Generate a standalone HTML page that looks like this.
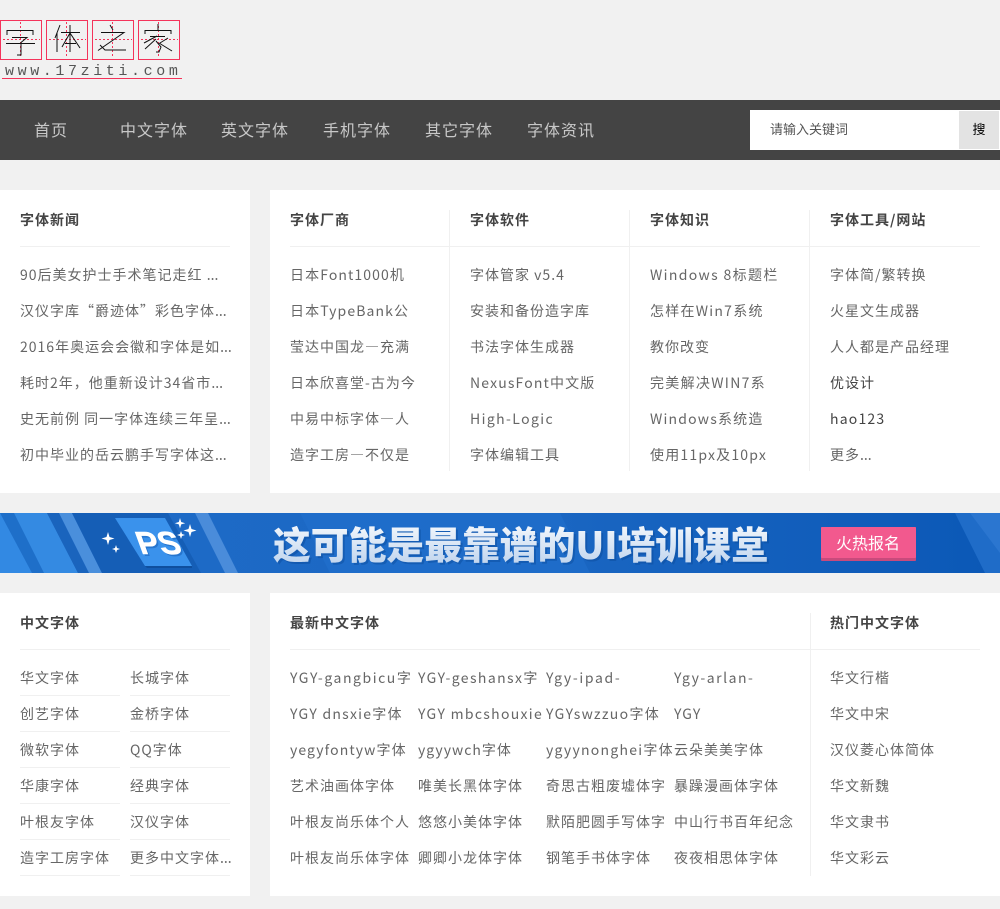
<!DOCTYPE html>
<html lang="zh-CN"><head><meta charset="utf-8"><title>字体之家</title>
<style>
html,body{margin:0;padding:0;background:#f1f1f1}
body{width:1000px;height:909px;position:relative;overflow:hidden;font-family:"Noto Sans CJK SC","DejaVu Sans",sans-serif;font-size:14px;letter-spacing:1px;color:#666}
.a{position:absolute;white-space:nowrap}
.p{position:absolute;background:#fff}
.l{position:absolute;background:#f0f0f0}
.h{position:absolute;white-space:nowrap;font-weight:bold;color:#444;font-size:14px;line-height:20px}
.t{position:absolute;white-space:nowrap;line-height:20px;color:#666}
.t i{font-style:normal;letter-spacing:0}
.n{position:absolute;white-space:nowrap;top:119px;line-height:20px;font-size:16px;color:#c8c8c8}
.d{color:#444}
</style></head><body>

<svg class="a" style="left:0;top:0" width="190" height="85" viewBox="0 0 190 85">
<g fill="none" stroke="#f4335a">
<rect x=".5" y="20.5" width="41" height="39"/><rect x="46.500" y="20.5" width="41" height="39"/><rect x="92.500" y="20.5" width="41" height="39"/><rect x="138.500" y="20.5" width="41" height="39"/>
<g stroke-dasharray="2 2"><path d="M20.500 22v36M66.500 22v36M112.500 22v36M158.500 22v36M3 39.500h37M49 39.500h37M95 39.500h37M141 39.500h37"/></g>
<path d="M2 78.500h180"/>
</g>
<g fill="none" stroke="#111" stroke-width="1">
<path d="M7 30.500h26M7 30v5M33 30v5M12 37.500h15l-6 5M6 43.500h29M21 42v13l-4 0"/>
<path d="M60 25l-5 13M57 33v19M61 32.500h19M70 25v27M70 33l-8 14M70 33l10 15M65 43.500h11"/>
<path d="M110 25l3 5M101 32.500h23l-26 18M100 45l5 5h21"/>
<path d="M158 24v6M145 30.500h26M145 30v4M171 30v4M150 36.500h15M157 36l-13 7M156 39l-11 10M156 41l5 6-2 5-3 0M168 38l-8 5M159 43l13 8"/>
</g>
</svg>
<div class="a" style="left:5px;top:63px;font:15px/18px 'Liberation Mono',monospace;letter-spacing:3.6px;color:#555">www.17ziti.com</div>

<div class="a" style="left:0;top:100px;width:1000px;height:60px;background:#444"></div>
<div class="n" style="left:34px">首页</div>
<div class="n" style="left:120px">中文字体</div>
<div class="n" style="left:221px">英文字体</div>
<div class="n" style="left:323px">手机字体</div>
<div class="n" style="left:425px">其它字体</div>
<div class="n" style="left:527px">字体资讯</div>
<div class="p" style="left:750px;top:110px;width:250px;height:40px"></div>
<div class="a" style="left:770px;top:119px;font-size:13px;line-height:19px;letter-spacing:0;color:#555">请输入关键词</div>
<div class="a" style="left:959px;top:111px;width:40px;height:38px;background:#e3e3e3;text-align:center;line-height:36px;font-size:13px;letter-spacing:0;color:#000">搜</div>

<div class="p" style="left:0;top:190px;width:250px;height:303px"></div>
<div class="p" style="left:270px;top:190px;width:730px;height:303px"></div>
<div class="l" style="left:20px;top:246px;width:210px;height:1px"></div>
<div class="l" style="left:290px;top:246px;width:690px;height:1px"></div>
<div class="l" style="left:449px;top:210px;width:1px;height:261px"></div>
<div class="l" style="left:629px;top:210px;width:1px;height:261px"></div>
<div class="l" style="left:809px;top:210px;width:1px;height:261px"></div>

<div class="h" style="left:20px;top:210px">字体新闻</div>
<div class="h" style="left:290px;top:210px">字体厂商</div>
<div class="h" style="left:470px;top:210px">字体软件</div>
<div class="h" style="left:650px;top:210px">字体知识</div>
<div class="h" style="left:830px;top:210px">字体工具/网站</div>

<div class="t" style="left:20px;top:265px">90后美女护士手术笔记走红 <i>...</i></div>
<div class="t" style="left:20px;top:301px">汉仪字库“爵迹体”彩色字体<i>...</i></div>
<div class="t" style="left:20px;top:337px">2016年奥运会会徽和字体是如<i>...</i></div>
<div class="t" style="left:20px;top:373px">耗时2年，他重新设计34省市<i>...</i></div>
<div class="t" style="left:20px;top:409px">史无前例 同一字体连续三年呈<i>...</i></div>
<div class="t" style="left:20px;top:445px">初中毕业的岳云鹏手写字体这<i>...</i></div>

<div class="t" style="left:290px;top:265px;letter-spacing:1.1px">日本Font1000机</div>
<div class="t" style="left:290px;top:301px;letter-spacing:1.1px">日本TypeBank公</div>
<div class="t" style="left:290px;top:337px">莹达中国龙—充满</div>
<div class="t" style="left:290px;top:373px">日本欣喜堂-古为今</div>
<div class="t" style="left:290px;top:409px">中易中标字体—人</div>
<div class="t" style="left:290px;top:445px">造字工房—不仅是</div>

<div class="t" style="left:470px;top:265px">字体管家 v5.4</div>
<div class="t" style="left:470px;top:301px">安装和备份造字库</div>
<div class="t" style="left:470px;top:337px">书法字体生成器</div>
<div class="t" style="left:470px;top:373px;letter-spacing:1.15px">NexusFont中文版</div>
<div class="t" style="left:470px;top:409px;letter-spacing:1.4px">High-Logic</div>
<div class="t" style="left:470px;top:445px">字体编辑工具</div>

<div class="t" style="left:650px;top:265px;letter-spacing:1.35px">Windows 8标题栏</div>
<div class="t" style="left:650px;top:301px;letter-spacing:1.25px">怎样在Win7系统</div>
<div class="t" style="left:650px;top:337px">教你改变</div>
<div class="t" style="left:650px;top:373px;letter-spacing:1.3px">完美解决WIN7系</div>
<div class="t" style="left:650px;top:409px;letter-spacing:1.2px">Windows系统造</div>
<div class="t" style="left:650px;top:445px;letter-spacing:1.2px">使用11px及10px</div>

<div class="t" style="left:830px;top:265px">字体简/繁转换</div>
<div class="t" style="left:830px;top:301px">火星文生成器</div>
<div class="t" style="left:830px;top:337px">人人都是产品经理</div>
<div class="t d" style="left:830px;top:373px">优设计</div>
<div class="t d" style="left:830px;top:409px;letter-spacing:1.2px">hao123</div>
<div class="t" style="left:830px;top:445px">更多<i>...</i></div>

<svg class="a" style="left:0;top:513px" width="1000" height="60" viewBox="0 0 1000 60">
<defs>
<linearGradient id="bg" x1="0" x2="1" y1="0" y2="0"><stop offset="0" stop-color="#1f6cc8"/><stop offset=".55" stop-color="#1a66c2"/><stop offset="1" stop-color="#0b58b6"/></linearGradient>
<linearGradient id="tx" x1="0" x2="0" y1="0" y2="1"><stop offset="0" stop-color="#ffffff"/><stop offset="1" stop-color="#b9d0ec"/></linearGradient>
</defs>
<rect width="1000" height="60" fill="url(#bg)"/>
<polygon points="0,0 14,0 44,60 32,60 0,0" fill="#1e6fc9"/>
<polygon points="0,0 0,60 32,60" fill="#3289e3"/>
<polygon points="14,0 47,0 78,60 44,60" fill="#348ae2"/>
<polygon points="47,0 59,0 89,60 78,60" fill="#1a64bd"/>
<polygon points="59,0 72,0 102,60 89,60" fill="#4a8fdc"/>
<polygon points="72,0 168,0 201,60 102,60" fill="#155eb6"/>
<polygon points="195,0 208,0 238,60 225,60" fill="#4a8cda"/>
<polygon points="300,0 560,0 590,60 330,60" fill="#2272cf" opacity=".5"/>
<polygon points="955,0 1000,0 1000,60 985,60" fill="#1f6cc8"/>
<polygon points="970,0 1000,0 1000,40" fill="#2b76d0"/>
<polygon points="145,53 192,53 192,55 147,55" fill="#0f4f9e"/>
<polygon points="115,5 165,5 192,53 145,53" fill="#3a92ec"/>
<text x="0" y="0" font-family="Liberation Sans,sans-serif" font-weight="bold" font-size="32" letter-spacing="0" fill="#1a64bd" opacity=".6" transform="translate(143,43) skewX(20)">PS</text>
<text x="0" y="0" font-family="Liberation Sans,sans-serif" font-weight="bold" font-size="32" letter-spacing="0" fill="#fff" stroke="#fff" stroke-width=".6" transform="translate(141,41) skewX(20)">PS</text>
<g fill="#fff">
<path d="M108 19l1.500 5 5 1.500-5 1.500-1.500 5-1.500-5-5-1.500 5-1.500zM116 32l1 3 3 1-3 1-1 3-1-3-3-1 3-1zM180 5l1.200 4 4 1.200-4 1.200-1.200 4-1.200-4-4-1.200 4-1.200zM190 11l1.500 5 5 1.500-5 1.500-1.500 5-1.500-5-5-1.500 5-1.500zM181 18l1 3 3 1-3 1-1 3-1-3-3-1 3-1z"/>
</g>
<text x="273" y="46" font-family="Noto Sans CJK SC,sans-serif" font-weight="900" font-size="37.800" letter-spacing="0" fill="#0a4a9a" opacity=".45" transform="translate(2 2)">这可能是最靠谱的UI培训课堂</text>
<text x="273" y="46" font-family="Noto Sans CJK SC,sans-serif" font-weight="900" font-size="37.800" letter-spacing="0" fill="url(#tx)">这可能是最靠谱的UI培训课堂</text>
<rect x="821" y="14" width="95" height="34" rx="1" fill="#c94a7c"/>
<rect x="821" y="14" width="95" height="31" rx="1" fill="#f2598e"/>
<text x="836" y="36" font-family="Noto Sans CJK SC,sans-serif" font-size="16" letter-spacing="0" fill="#fff">火热报名</text>
</svg>

<div class="p" style="left:0;top:593px;width:250px;height:303px"></div>
<div class="p" style="left:270px;top:593px;width:730px;height:303px"></div>
<div class="l" style="left:20px;top:649px;width:210px;height:1px"></div>
<div class="l" style="left:290px;top:649px;width:690px;height:1px"></div>
<div class="l" style="left:810px;top:613px;width:1px;height:263px"></div>
<div class="h" style="left:20px;top:613px">中文字体</div>
<div class="h" style="left:290px;top:613px">最新中文字体</div>
<div class="h" style="left:830px;top:613px">热门中文字体</div>

<div class="l" style="left:20px;top:695px;width:100px;height:1px"></div><div class="l" style="left:130px;top:695px;width:100px;height:1px"></div>
<div class="l" style="left:20px;top:731px;width:100px;height:1px"></div><div class="l" style="left:130px;top:731px;width:100px;height:1px"></div>
<div class="l" style="left:20px;top:767px;width:100px;height:1px"></div><div class="l" style="left:130px;top:767px;width:100px;height:1px"></div>
<div class="l" style="left:20px;top:803px;width:100px;height:1px"></div><div class="l" style="left:130px;top:803px;width:100px;height:1px"></div>
<div class="l" style="left:20px;top:839px;width:100px;height:1px"></div><div class="l" style="left:130px;top:839px;width:100px;height:1px"></div>
<div class="l" style="left:20px;top:875px;width:100px;height:1px"></div><div class="l" style="left:130px;top:875px;width:100px;height:1px"></div>

<div class="t" style="left:20px;top:668px">华文字体</div><div class="t" style="left:130px;top:668px">长城字体</div>
<div class="t" style="left:20px;top:704px">创艺字体</div><div class="t" style="left:130px;top:704px">金桥字体</div>
<div class="t" style="left:20px;top:740px">微软字体</div><div class="t" style="left:130px;top:740px">QQ字体</div>
<div class="t" style="left:20px;top:776px">华康字体</div><div class="t" style="left:130px;top:776px">经典字体</div>
<div class="t" style="left:20px;top:812px">叶根友字体</div><div class="t" style="left:130px;top:812px">汉仪字体</div>
<div class="t" style="left:20px;top:848px">造字工房字体</div><div class="t" style="left:130px;top:848px">更多中文字体<i>...</i></div>

<div class="t" style="left:290px;top:668px;letter-spacing:1.55px">YGY-gangbicu字</div><div class="t" style="left:418px;top:668px;letter-spacing:1.4px">YGY-geshansx字</div><div class="t" style="left:546px;top:668px;letter-spacing:1.65px">Ygy-ipad-</div><div class="t" style="left:674px;top:668px;letter-spacing:1.5px">Ygy-arlan-</div>
<div class="t" style="left:290px;top:704px;letter-spacing:1.25px">YGY dnsxie字体</div><div class="t" style="left:418px;top:704px;letter-spacing:1.3px">YGY mbcshouxie</div><div class="t" style="left:546px;top:704px;letter-spacing:1.35px">YGYswzzuo字体</div><div class="t" style="left:674px;top:704px">YGY</div>
<div class="t" style="left:290px;top:740px;letter-spacing:1.1px">yegyfontyw字体</div><div class="t" style="left:418px;top:740px">ygyywch字体</div><div class="t" style="left:546px;top:740px;letter-spacing:1.25px">ygyynonghei字体</div><div class="t" style="left:674px;top:740px">云朵美美字体</div>
<div class="t" style="left:290px;top:776px">艺术油画体字体</div><div class="t" style="left:418px;top:776px">唯美长黑体字体</div><div class="t" style="left:546px;top:776px">奇思古粗废墟体字</div><div class="t" style="left:674px;top:776px">暴躁漫画体字体</div>
<div class="t" style="left:290px;top:812px">叶根友尚乐体个人</div><div class="t" style="left:418px;top:812px">悠悠小美体字体</div><div class="t" style="left:546px;top:812px">默陌肥圆手写体字</div><div class="t" style="left:674px;top:812px">中山行书百年纪念</div>
<div class="t" style="left:290px;top:848px">叶根友尚乐体字体</div><div class="t" style="left:418px;top:848px">卿卿小龙体字体</div><div class="t" style="left:546px;top:848px">钢笔手书体字体</div><div class="t" style="left:674px;top:848px">夜夜相思体字体</div>

<div class="t" style="left:830px;top:668px">华文行楷</div>
<div class="t" style="left:830px;top:704px">华文中宋</div>
<div class="t" style="left:830px;top:740px">汉仪菱心体简体</div>
<div class="t" style="left:830px;top:776px">华文新魏</div>
<div class="t" style="left:830px;top:812px">华文隶书</div>
<div class="t" style="left:830px;top:848px">华文彩云</div>
</body></html>
